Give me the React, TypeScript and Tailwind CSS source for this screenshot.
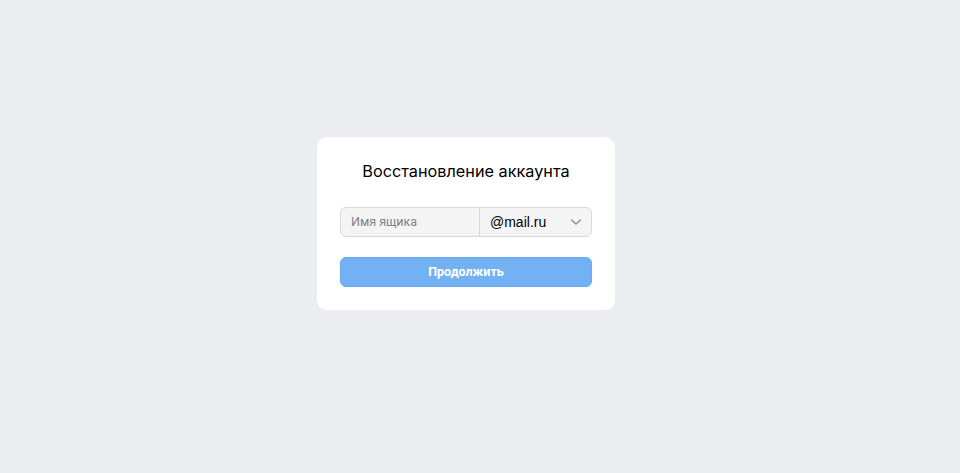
import React from "react";

export default function App() {
  return (
    <div className="min-h-[473px] w-full bg-[#ecedf1] pt-[137px] pl-[317px] font-['Liberation_Sans',Arial,sans-serif]">
      <div className="w-[298px] rounded-[10px] bg-white px-[23px] pt-[22px] pb-[23px]">
        <h1 className="text-center font-['Inter','Liberation_Sans',sans-serif] text-[16.25px] leading-[24px] text-black">
          Восстановление аккаунта
        </h1>
        <div className="mt-[24px] flex h-[30px] w-[252px] rounded-[6px] border border-[#d8d9dc] bg-[#f4f4f5]">
          <div className="flex w-[139px] items-center border-r border-[#d8d9dc] pl-[10px] font-['Roboto','Liberation_Sans',sans-serif] text-[12.5px] text-[#7d8189]">
            Имя ящика
          </div>
          <div className="flex flex-1 items-center justify-between pl-[10px] pr-[9px] text-[14px] text-black">
            <span>@mail.ru</span>
            <svg width="12" height="8" viewBox="0 0 12 8" fill="none">
              <path d="M1.5 2L6 6L10.5 2" stroke="#818c99" strokeWidth="1.3" strokeLinecap="round" strokeLinejoin="round" />
            </svg>
          </div>
        </div>
        <button className="mt-[20px] flex h-[30px] w-[252px] items-center justify-center rounded-[6px] border border-[#6aa9ec] bg-[#72b2f2] font-['Roboto','Liberation_Sans',sans-serif] text-[12.5px] font-bold text-white">
          Продолжить
        </button>
      </div>
    </div>
  );
}
